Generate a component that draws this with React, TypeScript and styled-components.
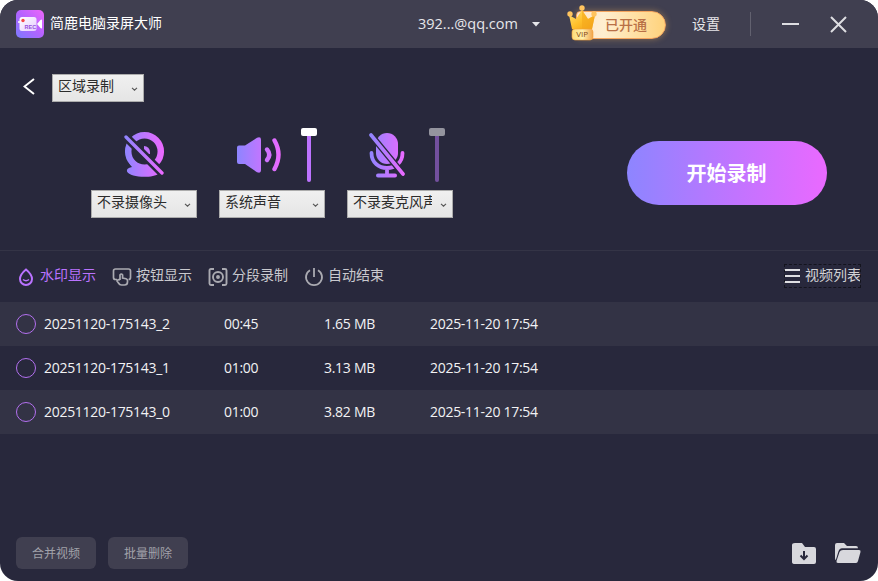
import React from "react";
import styled, { createGlobalStyle } from "styled-components";

const GlobalStyle = createGlobalStyle`
  * { box-sizing: border-box; }
  body { margin: 0; background: #fff; }
  svg { display: block; flex: none; }
`;

const Window = styled.div`
  width: 878px;
  height: 581px;
  display: flex;
  flex-direction: column;
  overflow: hidden;
  border-radius: 18px;
  background: #28283c;
  color: #e6e6ea;
  font: 14px/20px "Open Sans", "Noto Sans CJK SC", sans-serif;
  white-space: nowrap;
`;

const TitleBar = styled.header`
  height: 48px;
  flex: none;
  display: flex;
  align-items: center;
  padding: 0 30px 0 16px;
  background: #403f50;
`;

const AppTitle = styled.h1`
  margin: 0 0 2px 6px;
  flex: 1;
  font-size: 14px;
  font-weight: 400;
  color: #fff;
`;

const Account = styled.div`
  display: flex;
  align-items: center;
  justify-content: space-between;
  width: 122px;
  margin-right: 36px;
  font-size: 14.5px;
`;

const VipBadge = styled.div`
  position: relative;
  width: 90px;
  height: 28px;
  margin: 2px 26px 0 0;
  padding-left: 28px;
  border: 1.5px solid #f5a55e;
  border-radius: 4px 14px 14px 4px;
  background: linear-gradient(90deg, #ffe4c8, #ffefd0 30%, #ffd27b);
  box-shadow: 0 0 6px rgba(255, 190, 90, 0.4);
  color: #b97046;
  font-size: 14px;
  font-weight: 500;
  line-height: 26px;
`;

const Crown = styled.svg`
  position: absolute;
  left: -11px;
  top: -8px;
`;

const Settings = styled.span`
  width: 58px;
  padding-bottom: 1px;
`;

const Divider = styled.i`
  width: 1px;
  height: 24px;
  margin-right: 31px;
  background: #62616f;
`;

const Controls = styled.section`
  height: 203px;
  flex: none;
  display: flex;
  justify-content: space-between;
  padding: 26px 51px 0 23px;
  border-bottom: 1px solid #343446;
`;

const ModeRow = styled.div`
  display: flex;
  align-items: flex-start;
  gap: 17px;
  height: 54px;
`;

const BackIcon = styled.svg`
  margin-top: 4px;
`;

const Sources = styled.div`
  display: flex;
  gap: 22px;
  padding-left: 68px;
`;

const SourceTop = styled.div<{ $inset: number }>`
  display: flex;
  justify-content: space-between;
  height: 62px;
  padding: 0 8px 0 ${(p) => p.$inset}px;
`;

const SourceIcon = styled.svg`
  margin-top: 2px;
`;

const Slider = styled.div<{ $off?: boolean }>`
  width: 16px;
  height: 54px;
  display: flex;
  flex-direction: column;
  align-items: center;

  &::before {
    content: "";
    width: 16px;
    height: 8px;
    flex: none;
    border-radius: 2px;
    background: ${(p) => (p.$off ? "#94949e" : "#fff")};
  }
  &::after {
    content: "";
    width: 4px;
    flex: 1;
    border-radius: 0 0 2px 2px;
    background: ${(p) => (p.$off ? "#73509e" : "#bd73ff")};
  }
`;

const SelectBox = styled.div<{ $width: number }>`
  width: ${(p) => p.$width}px;
  height: 28px;
  display: flex;
  justify-content: space-between;
  align-items: center;
  padding: 0 5px 0 5px;
  border: 1px solid #acacac;
  background: linear-gradient(#f0f0f0, #e5e5e5);
  color: #2c2c2c;

  svg { margin-top: 1px; }
`;

const SelectText = styled.span`
  max-width: 79px;
  overflow: hidden;
  padding-bottom: 4px;
`;

const RecordButton = styled.button`
  width: 200px;
  height: 64px;
  margin-top: 67px;
  padding: 0 1px 0 0;
  border: 0;
  border-radius: 32px;
  background: linear-gradient(90deg, #8d85ff, #bd75ff 50%, #ea69ff);
  color: #fff;
  font: 700 20px/66px "Open Sans", "Noto Sans CJK SC", sans-serif;
`;

const Toolbar = styled.nav`
  height: 51px;
  flex: none;
  display: flex;
  align-items: center;
  padding: 0 16px 1px 16px;
`;

const Tool = styled.div<{ $active?: boolean }>`
  width: 96px;
  display: flex;
  align-items: center;
  gap: 4px;
  color: ${(p) => (p.$active ? "#ba73ff" : "#c9c9ce")};

  svg { margin-top: 1px; }
  span { padding-bottom: 2px; }
`;

const ListToggle = styled.div`
  width: 77px;
  height: 24px;
  margin: 0 1px 0 auto;
  display: flex;
  align-items: center;
  gap: 5px;
  outline: 1px dashed #14141e;
  outline-offset: -1px;
  color: #d2d2d6;

  span { padding-bottom: 3px; }
`;

const Row = styled.div`
  height: 44px;
  flex: none;
  display: grid;
  grid-template-columns: 28px 180px 100px 106px 1fr;
  align-items: center;
  padding: 0 16px;
  color: #f2f2f4;
  font-size: 14px;
  letter-spacing: -0.29px;

  &:nth-child(odd) { background: #333345; }
`;

const Radio = styled.i`
  width: 20px;
  height: 20px;
  border: 1px solid #b370f0;
  border-radius: 50%;
`;

const Footer = styled.footer`
  margin-top: auto;
  display: flex;
  align-items: center;
  gap: 12px;
  padding: 0 17px 12px 16px;
`;

const FooterButton = styled.button`
  width: 80px;
  height: 32px;
  padding: 0;
  border: 0;
  border-radius: 6px;
  background: #403f50;
  color: #a2a2aa;
  font: 12px/34px "Open Sans", "Noto Sans CJK SC", sans-serif;
`;

const FolderActions = styled.div`
  margin: 1px 0 0 auto;
  display: flex;
  gap: 18px;
`;

function Select({ width, children }: { width: number; children: string }) {
  return (
    <SelectBox $width={width}>
      <SelectText>{children}</SelectText>
      <svg width="7" height="6" viewBox="0 0 7 6" fill="none" stroke="#555" strokeWidth="1.1">
        <path d="M1 1.8 3.5 4.2 6 1.8" />
      </svg>
    </SelectBox>
  );
}

function Gradient({ id, width }: { id: string; width: number }) {
  return (
    <linearGradient id={id} gradientUnits="userSpaceOnUse" x1="0" x2={width} y1="0" y2="0">
      <stop stopColor="#8d85ff" />
      <stop offset="1" stopColor="#ed69ff" />
    </linearGradient>
  );
}

function AppLogo() {
  return (
    <svg width="28" height="28" viewBox="0 0 28 28">
      <defs>
        <linearGradient id="logo" x1="0" y1="1" x2="1" y2="0">
          <stop stopColor="#7b7bff" />
          <stop offset=".5" stopColor="#b363ff" />
          <stop offset="1" stopColor="#ee66fa" />
        </linearGradient>
        <linearGradient id="body" x1="0" y1="0" x2="1" y2="1">
          <stop stopColor="#fff" />
          <stop offset="1" stopColor="#e5ccff" />
        </linearGradient>
      </defs>
      <rect width="28" height="28" rx="5" fill="url(#logo)" />
      <path d="M2 12h2" stroke="#fff" strokeWidth="1.5" />
      <rect x="3.5" y="7" width="17" height="14" rx="2.5" fill="url(#body)" />
      <path d="m21 14 3.500-4q1.500-1.300 1.500.5v7q0 1.800-1.500.5Z" fill="#fff" />
      <circle cx="7" cy="10.500" r="1.700" fill="#f44949" />
      <text x="8.500" y="18.800" fontSize="5.500" fontWeight="700" fill="#9450dc" fontFamily="Liberation Sans">REC</text>
    </svg>
  );
}

function CameraOff() {
  return (
    <SourceIcon width="44" height="50" viewBox="0 0 44 50">
      <defs>
        <Gradient id="cam" width={40} />
        <mask id="camCut">
          <rect width="44" height="50" fill="#fff" />
          <path d="M0 5 40 45" stroke="#000" strokeWidth="8.500" />
        </mask>
      </defs>
      <g mask="url(#camCut)">
        <circle cx="20.500" cy="21.500" r="16.300" fill="none" stroke="url(#cam)" strokeWidth="6.500" />
        <path d="M20 16a6 6 0 0 1 6 6v2h-6Z" fill="url(#cam)" />
        <path d="M5 33 8 37q-6 1-5 4.500c3 6.500 26 7 32 2L25 34l-6 4-9-4Z" fill="url(#cam)" />
      </g>
      <path d="M2 7 38 43" stroke="url(#cam)" strokeWidth="3.300" strokeLinecap="round" />
    </SourceIcon>
  );
}

function Speaker() {
  return (
    <SourceIcon width="46" height="50" viewBox="0 0 46 50">
      <defs><Gradient id="spk" width={44} /></defs>
      <path d="M2 15.500h6L20 7.800q4-1.600 4 2v30.400q0 3.600-4 2L8 34H2q-2 0-2-2V17.500q0-2 2-2Z" fill="url(#spk)" />
      <g fill="none" stroke="url(#spk)" strokeWidth="4.400" strokeLinecap="round">
        <path d="M30 19.500q4.500 5 0 10.500" />
        <path d="M37.500 10.500q8 14 0 28.500" />
      </g>
    </SourceIcon>
  );
}

function MicOff() {
  return (
    <SourceIcon width="40" height="50" viewBox="0 0 40 50">
      <defs>
        <Gradient id="mic" width={36} />
        <mask id="micCut">
          <rect width="40" height="50" fill="#fff" />
          <path d="M2 5 34 44" stroke="#000" strokeWidth="6.400" />
        </mask>
      </defs>
      <g mask="url(#micCut)">
        <rect x="7" y="3" width="22" height="31" rx="11" fill="url(#mic)" />
        <path d="M2.500 23c0 20 31 20 31 0M18 38v7" fill="none" stroke="url(#mic)" strokeWidth="3.800" strokeLinecap="round" />
      </g>
      <rect x="7" y="43.500" width="21" height="4" rx="2" fill="url(#mic)" />
      <path d="M2 5 34 44" stroke="url(#mic)" strokeWidth="3.600" strokeLinecap="round" />
    </SourceIcon>
  );
}

function VipCrown() {
  return (
    <Crown width="34" height="38" viewBox="0 0 34 38">
      <defs>
        <linearGradient id="gold" x1="0" y1="0" x2="1" y2="1">
          <stop stopColor="#ffe176" /><stop offset=".5" stopColor="#ffc02b" /><stop offset="1" stopColor="#ee9815" />
        </linearGradient>
        <linearGradient id="plate"><stop stopColor="#ffdc79" /><stop offset=".5" stopColor="#fff0ad" /><stop offset="1" stopColor="#f0a44d" /></linearGradient>
      </defs>
      <path d="m3 11 7 4 6-9 6 9 7-4-3 14q-10 2-20 0Z" fill="url(#gold)" />
      <path d="m16 6 6 9 7-4-3 14-10 1Z" fill="#f5a81d" opacity=".6" />
      <g fill="#ffc45f"><circle cx="16" cy="4" r="2.700" /><circle cx="4" cy="10" r="2.700" /><circle cx="28" cy="10" r="2.700" /></g>
      <rect x="6" y="25" width="21" height="11" rx="3" fill="url(#plate)" stroke="#f5a33b" strokeWidth=".6" />
      <text x="16.200" y="33.400" textAnchor="middle" fontSize="8" fontFamily="Open Sans" fill="#864815">VIP</text>
    </Crown>
  );
}

const recordings = [
  ["20251120-175143_2", "00:45", "1.65 MB", "2025-11-20 17:54"],
  ["20251120-175143_1", "01:00", "3.13 MB", "2025-11-20 17:54"],
  ["20251120-175143_0", "01:00", "3.82 MB", "2025-11-20 17:54"],
];

export default function App() {
  return (
    <>
      <GlobalStyle />
      <Window>
        <TitleBar>
          <AppLogo />
          <AppTitle>简鹿电脑录屏大师</AppTitle>
          <Account>
            392...@qq.com
            <svg width="8" height="5" viewBox="0 0 8 5" fill="#e6e6ea"><path d="M0 0h8L4 4.500Z" /></svg>
          </Account>
          <VipBadge><VipCrown />已开通</VipBadge>
          <Settings>设置</Settings>
          <Divider />
          <svg width="66" height="18" viewBox="0 0 66 18" fill="none" stroke="#dedee2" strokeWidth="2">
            <path d="M0 9h17M49 2l15 15M64 2 49 17" />
          </svg>
        </TitleBar>

        <Controls>
          <div>
            <ModeRow>
              <BackIcon width="12" height="17" viewBox="0 0 12 17" fill="none" stroke="#fff" strokeWidth="2">
                <path d="m11 1-9.500 7.500L11 16" />
              </BackIcon>
              <Select width={92}>区域录制</Select>
            </ModeRow>
            <Sources>
              <div>
                <SourceTop $inset={33}><CameraOff /></SourceTop>
                <Select width={106}>不录摄像头</Select>
              </div>
              <div>
                <SourceTop $inset={18}><Speaker /><Slider /></SourceTop>
                <Select width={106}>系统声音</Select>
              </div>
              <div>
                <SourceTop $inset={22}><MicOff /><Slider $off /></SourceTop>
                <Select width={106}>不录麦克风声音</Select>
              </div>
            </Sources>
          </div>
          <RecordButton>开始录制</RecordButton>
        </Controls>

        <Toolbar>
          <Tool $active>
            <svg width="20" height="20" viewBox="0 0 20 20" fill="none" stroke="currentColor" strokeWidth="2">
              <path d="M10 2.500C7 5 4 9 4 12a6 6 0 0 0 12 0c0-3-3-7-6-9.500Z" />
              <path d="M7 12.500q3 2.500 6 0" strokeWidth="1.500" />
            </svg>
            <span>水印显示</span>
          </Tool>
          <Tool>
            <svg width="20" height="20" viewBox="0 0 20 20" fill="none" stroke="#aaaab1" strokeWidth="1.700">
              <path d="M5 12.500H3.500q-2 0-2-2V4q0-2 2-2h13q2 0 2 2v6.500q0 2-2 2" />
              <path d="M8 13V8q1.300-2 2.600 0v3l3.400.7q1.500.5 1.500 2V15q0 3-3 3H9.500q-2 0-3-2L5 14q1-2 3-1" />
            </svg>
            <span>按钮显示</span>
          </Tool>
          <Tool>
            <svg width="20" height="20" viewBox="0 0 20 20" fill="none" stroke="#aaaab1" strokeWidth="1.900">
              <path d="M6 2H3q-1.500 0-1.500 1.500v13Q1.500 18 3 18h3M14 2h3q1.500 0 1.500 1.500v13Q18.500 18 17 18h-3" />
              <circle cx="10" cy="10" r="5" /><circle cx="10" cy="10" r="1" />
            </svg>
            <span>分段录制</span>
          </Tool>
          <Tool>
            <svg width="20" height="20" viewBox="0 0 20 20" fill="none" stroke="#aaaab1" strokeWidth="1.800">
              <path d="M6 3.200a8 8 0 1 0 8 0M10 1v9" />
            </svg>
            <span>自动结束</span>
          </Tool>
          <ListToggle>
            <svg width="16" height="16" viewBox="0 0 16 16" stroke="#dedee2" strokeWidth="2">
              <path d="M0 2h16M0 8h16M0 14h16" />
            </svg>
            <span>视频列表</span>
          </ListToggle>
        </Toolbar>

        <div>
          {recordings.map(([name, duration, size, date]) => (
            <Row key={name}>
              <Radio />
              <span>{name}</span>
              <span>{duration}</span>
              <span>{size}</span>
              <span>{date}</span>
            </Row>
          ))}
        </div>

        <Footer>
          <FooterButton>合并视频</FooterButton>
          <FooterButton>批量删除</FooterButton>
          <FolderActions>
            <svg width="25" height="22" viewBox="0 0 25 22">
              <path d="M3 0h7l3 4h9q2 0 2 2v13q0 2-2 2H3q-3 0-3-2V2q0-2 3-2Z" fill="#d8d8dd" />
              <path d="M12 8v8M8.500 12.500 12 16l3.500-3.500" fill="none" stroke="#28283c" strokeWidth="2" />
            </svg>
            <svg width="26" height="22" viewBox="0 0 26 22" fill="#d8d8dd">
              <path d="M2 0h7l3 3h9q2 0 2 2.300H7q-2.500 0-3.500 3L.8 17Q0 17 0 15V2Q0 0 2 0Z" />
              <path d="M8 7h16q2 0 1.500 2l-2.500 9q-.5 2-2 2H3q-2 0-1.500-2l3-9q.8-2 3.500-2Z" />
            </svg>
          </FolderActions>
        </Footer>
      </Window>
    </>
  );
}
